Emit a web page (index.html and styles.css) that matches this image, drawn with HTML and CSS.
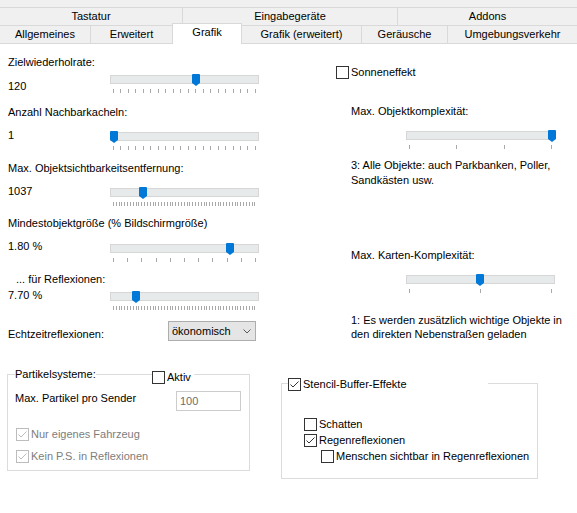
FILE: index.html
```html
<!DOCTYPE html>
<html lang="de">
<head>
<meta charset="utf-8">
<title>Grafik</title>
<link rel="stylesheet" href="styles.css">
</head>
<body>
<div class="tabs">
  <div class="trow row1">
    <div class="tab w183">Tastatur</div>
    <div class="tab w215">Eingabegeräte</div>
    <div class="tab w179">Addons</div>
  </div>
  <div class="trow row2">
    <div class="tab w91">Allgemeines</div>
    <div class="tab w81 nob">Erweitert</div>
    <div class="tab w70 sel">Grafik</div>
    <div class="tab w120">Grafik (erweitert)</div>
    <div class="tab w86">Geräusche</div>
    <div class="tab w129">Umgebungsverkehr</div>
  </div>
</div>

<div class="page">
  <div class="top">
    <div class="lcol">
      <div class="lbl">Zielwiederholrate:</div>
      <div class="srow r1">
        <div class="val">120</div>
        <div class="slider">
          <div class="track"><span class="thumb" style="left:81px"><svg width="8" height="12" viewBox="0 0 8 12"><path d="M1 0H7Q8 0 8 1V9L4 12L0 9V1Q0 0 1 0Z" fill="#0078d7"/></svg></span></div>
          <div class="ticks"><i></i><i></i><i></i><i></i><i></i><i></i><i></i><i></i><i></i><i></i><i></i><i></i><i></i><i></i><i></i><i></i><i></i><i></i><i></i><i></i></div>
        </div>
      </div>

      <div class="lbl m10">Anzahl Nachbarkacheln:</div>
      <div class="srow r2">
        <div class="val">1</div>
        <div class="slider">
          <div class="track"><span class="thumb" style="left:-1px"><svg width="8" height="12" viewBox="0 0 8 12"><path d="M1 0H7Q8 0 8 1V9L4 12L0 9V1Q0 0 1 0Z" fill="#0078d7"/></svg></span></div>
          <div class="ticks"><i></i><i></i><i></i><i></i><i></i><i></i><i></i><i></i><i></i><i></i><i></i><i></i><i></i><i></i><i></i><i></i><i></i><i></i><i></i><i></i></div>
        </div>
      </div>

      <div class="lbl m10">Max. Objektsichtbarkeitsentfernung:</div>
      <div class="srow r3">
        <div class="val">1037</div>
        <div class="slider">
          <div class="track"><span class="thumb" style="left:28px"><svg width="8" height="12" viewBox="0 0 8 12"><path d="M1 0H7Q8 0 8 1V9L4 12L0 9V1Q0 0 1 0Z" fill="#0078d7"/></svg></span></div>
          <div class="ticks"><i></i><i></i><i></i><i></i><i></i><i></i><i></i><i></i><i></i><i></i><i></i><i></i><i></i><i></i><i></i><i></i><i></i><i></i><i></i><i></i><i></i><i></i><i></i><i></i><i></i><i></i><i></i><i></i><i></i><i></i><i></i><i></i><i></i><i></i><i></i><i></i><i></i><i></i><i></i><i></i><i></i><i></i><i></i><i></i><i></i><i></i><i></i><i></i><i></i><i></i><i></i></div>
        </div>
      </div>

      <div class="lbl m9">Mindestobjektgröße (% Bildschirmgröße)</div>
      <div class="srow r4">
        <div class="val">1.80 %</div>
        <div class="slider">
          <div class="track"><span class="thumb" style="left:115px"><svg width="8" height="12" viewBox="0 0 8 12"><path d="M1 0H7Q8 0 8 1V9L4 12L0 9V1Q0 0 1 0Z" fill="#0078d7"/></svg></span></div>
          <div class="ticks"><i></i><i></i><i></i><i></i><i></i><i></i><i></i><i></i><i></i><i></i><i></i></div>
        </div>
      </div>

      <div class="lbl m9 indent">... für Reflexionen:</div>
      <div class="srow r5">
        <div class="val">7.70 %</div>
        <div class="slider">
          <div class="track"><span class="thumb" style="left:21px"><svg width="8" height="12" viewBox="0 0 8 12"><path d="M1 0H7Q8 0 8 1V9L4 12L0 9V1Q0 0 1 0Z" fill="#0078d7"/></svg></span></div>
          <div class="ticks"><i></i><i></i><i></i><i></i><i></i><i></i><i></i><i></i><i></i><i></i><i></i><i></i><i></i><i></i><i></i><i></i><i></i><i></i><i></i><i></i><i></i><i></i><i></i><i></i><i></i><i></i><i></i><i></i><i></i><i></i><i></i><i></i><i></i><i></i><i></i><i></i><i></i><i></i><i></i><i></i><i></i><i></i><i></i><i></i><i></i><i></i><i></i><i></i><i></i><i></i><i></i></div>
        </div>
      </div>

      <div class="echt">
        <div class="echt-lbl">Echtzeitreflexionen:</div>
        <div class="select"><span>ökonomisch</span><svg width="8" height="5" viewBox="0 0 8 5"><path d="M0.5 0.5L4 4L7.5 0.5" fill="none" stroke="#5a5a5a" stroke-width="1"/></svg></div>
      </div>
    </div>

    <div class="rcol">
      <div class="cbrow"><span class="cb"></span><span>Sonneneffekt</span></div>
      <div class="rlbl m23">Max. Objektkomplexität:</div>
      <div class="slider rslider">
        <div class="track"><span class="thumb" style="left:141px"><svg width="8" height="12" viewBox="0 0 8 12"><path d="M1 0H7Q8 0 8 1V9L4 12L0 9V1Q0 0 1 0Z" fill="#0078d7"/></svg></span></div>
        <div class="ticks"><i></i><i></i><i></i><i></i></div>
      </div>
      <div class="rdesc d1">3: Alle Objekte: auch Parkbanken, Poller,<br>Sandkästen usw.</div>
      <div class="rlbl m59">Max. Karten-Komplexität:</div>
      <div class="slider rslider">
        <div class="track"><span class="thumb" style="left:69px"><svg width="8" height="12" viewBox="0 0 8 12"><path d="M1 0H7Q8 0 8 1V9L4 12L0 9V1Q0 0 1 0Z" fill="#0078d7"/></svg></span></div>
        <div class="ticks"><i></i><i></i><i></i></div>
      </div>
      <div class="rdesc d2">1: Es werden zusätzlich wichtige Objekte in<br>den direkten Nebenstraßen geladen</div>
    </div>
  </div>

  <div class="bottom">
    <div class="group gleft">
      <div class="ghead">
        <div class="glegend"><span class="bgw">Partikelsysteme:</span></div>
        <div class="cbrow aktiv bgw"><span class="cb"></span><span>Aktiv</span></div>
      </div>
      <div class="prow">
        <div class="plbl">Max. Partikel pro Sender</div>
        <div class="input">100</div>
      </div>
      <div class="cbrow dis first"><span class="cb chk"><svg width="11" height="11" viewBox="0 0 11 11"><path d="M1.5 5.5L4 8L9.5 2.5" fill="none" stroke="#bcbcbc" stroke-width="1"/></svg></span><span>Nur eigenes Fahrzeug</span></div>
      <div class="cbrow dis second"><span class="cb chk"><svg width="11" height="11" viewBox="0 0 11 11"><path d="M1.5 5.5L4 8L9.5 2.5" fill="none" stroke="#bcbcbc" stroke-width="1"/></svg></span><span>Kein P.S. in Reflexionen</span></div>
    </div>

    <div class="group gright">
      <div class="cbrow shead bgw"><span class="cb chk"><svg width="11" height="11" viewBox="0 0 11 11"><path d="M1.5 5.5L4 8L9.5 2.5" fill="none" stroke="#333" stroke-width="1"/></svg></span><span>Stencil-Buffer-Effekte</span></div>
      <div class="cbrow sub s1"><span class="cb"></span><span>Schatten</span></div>
      <div class="cbrow sub"><span class="cb chk"><svg width="11" height="11" viewBox="0 0 11 11"><path d="M1.5 5.5L4 8L9.5 2.5" fill="none" stroke="#333" stroke-width="1"/></svg></span><span>Regenreflexionen</span></div>
      <div class="cbrow sub2"><span class="cb"></span><span>Menschen sichtbar in Regenreflexionen</span></div>
    </div>
  </div>
</div>
</body>
</html>
```

FILE: styles.css
```css
* { box-sizing: border-box; }

body {
  margin: 0;
  width: 577px;
  height: 513px;
  overflow: hidden;
  background: #fff;
  color: #000;
  font-family: "Liberation Sans", Arial, sans-serif;
  font-size: 11px;
  line-height: 16px;
}

/* Tabs */
.tabs {
  background: #f0f0f0;
  padding-top: 7px;
}
.trow {
  display: flex;
  border-top: 1px solid #d9d9d9;
}
.row1 { height: 18px; }
.row2 { height: 19px; border-bottom: 1px solid #d9d9d9; }
.tab {
  line-height: 17px;
  text-align: center;
  white-space: nowrap;
  border-right: 1px solid #d9d9d9;
  flex: none;
}
.tab:last-child { border-right: none; }
.tab.nob { border-right: none; }
.tab.sel {
  position: relative;
  background: #fff;
  border: 1px solid #d9d9d9;
  border-bottom: none;
  margin-top: -3px;
  margin-bottom: -1px;
}
.w183 { width: 183px; }
.w215 { width: 215px; }
.w179 { width: 179px; }
.w91 { width: 91px; }
.w81 { width: 81px; }
.w70 { width: 70px; }
.w120 { width: 120px; }
.w86 { width: 86px; }
.w129 { width: 129px; }

/* Page */
.top {
  display: flex;
  height: 316px;
}
.lcol {
  width: 287px;
  padding: 10px 0 0 8px;
}
.rcol {
  flex: 1;
  padding: 20px 0 0 49px;
}

.lbl { white-space: nowrap; }
.m9 { margin-top: 9px; }
.m10 { margin-top: 10px; }
.indent { padding-left: 8px; }

.srow {
  display: flex;
  align-items: flex-start;
}
.val { width: 102px; }
.r1 .val { margin-top: 8px; }
.r1 .slider { margin-top: 5px; }
.r2 .val, .r3 .val, .r4 .val { margin-top: 7px; }
.r2 .slider, .r3 .slider { margin-top: 12px; }
.r4 .slider { margin-top: 13px; }
.r5 .slider { margin-top: 5px; }

/* Slider */
.slider { width: 149px; }
.track {
  position: relative;
  height: 9px;
  border: 1px solid #d6d6d6;
  background: #e7eaea;
}
.thumb {
  position: absolute;
  top: -2px;
  width: 8px;
  height: 12px;
  display: block;
}
.thumb svg { display: block; }
.ticks {
  display: flex;
  justify-content: space-between;
  height: 4px;
  margin-top: 5px;
  padding: 0 3px;
}
.ticks i {
  display: block;
  width: 1px;
  background: #a8a8a8;
}

/* Echtzeit */
.echt {
  display: flex;
  align-items: flex-start;
  margin-top: 11px;
}
.echt-lbl {
  width: 160px;
  margin-top: 5px;
}
.select {
  width: 88px;
  height: 20px;
  border: 1px solid #adadad;
  background: #e5e5e5;
  display: flex;
  align-items: center;
  justify-content: space-between;
  padding: 0 4px 0 3px;
}
.select svg { display: block; }

/* Right column */
.rlbl { margin-left: 15px; white-space: nowrap; }
.m23 { margin-top: 23px; }
.m59 { margin-top: 59px; }
.rslider { margin-left: 70px; margin-top: 12px; }
.rdesc { margin-left: 15px; white-space: nowrap; }
.d1 { margin-top: 9px; line-height: 15px; }
.d2 { margin-top: 20px; line-height: 14px; }

/* Checkboxes */
.cbrow {
  display: flex;
  align-items: center;
  height: 16px;
  white-space: nowrap;
}
.cb {
  flex: none;
  width: 13px;
  height: 13px;
  border: 1px solid #333;
  background: #fff;
  margin-right: 2px;
  display: block;
}
.cb svg { display: block; }
.dis { color: #7d7d7d; }
.dis .cb { border-color: #bcbcbc; }

/* Groups */
.bottom {
  display: flex;
  align-items: flex-start;
}
.group {
  border: 1px solid #dcdcdc;
  flex: none;
}
.gleft {
  margin: 14px 0 0 7px;
  width: 243px;
  height: 97px;
  padding-left: 7px;
}
.gright {
  margin: 23px 0 0 31px;
  width: 257px;
  height: 96px;
}
.bgw { background: #fff; }

.ghead {
  display: flex;
  align-items: flex-start;
  margin-top: -9px;
}
.glegend { width: 137px; }
.aktiv { margin-top: 3px; padding-right: 3px; }

.prow {
  display: flex;
  align-items: flex-start;
  margin-top: 5px;
}
.plbl { width: 161px; }
.input {
  margin-top: 1px;
  width: 65px;
  height: 20px;
  border: 1px solid #cccccc;
  color: #6d6d6d;
  padding-left: 3px;
  line-height: 18px;
}
.dis.first { margin-top: 15px; margin-left: 1px; }
.dis.second { margin-top: 6px; margin-left: 1px; }

.shead {
  margin-top: -8px;
  margin-left: 6px;
  width: 200px;
}
.sub { margin-left: 22px; }
.s1 { margin-top: 24px; }
.sub2 { margin-left: 39px; }
```
